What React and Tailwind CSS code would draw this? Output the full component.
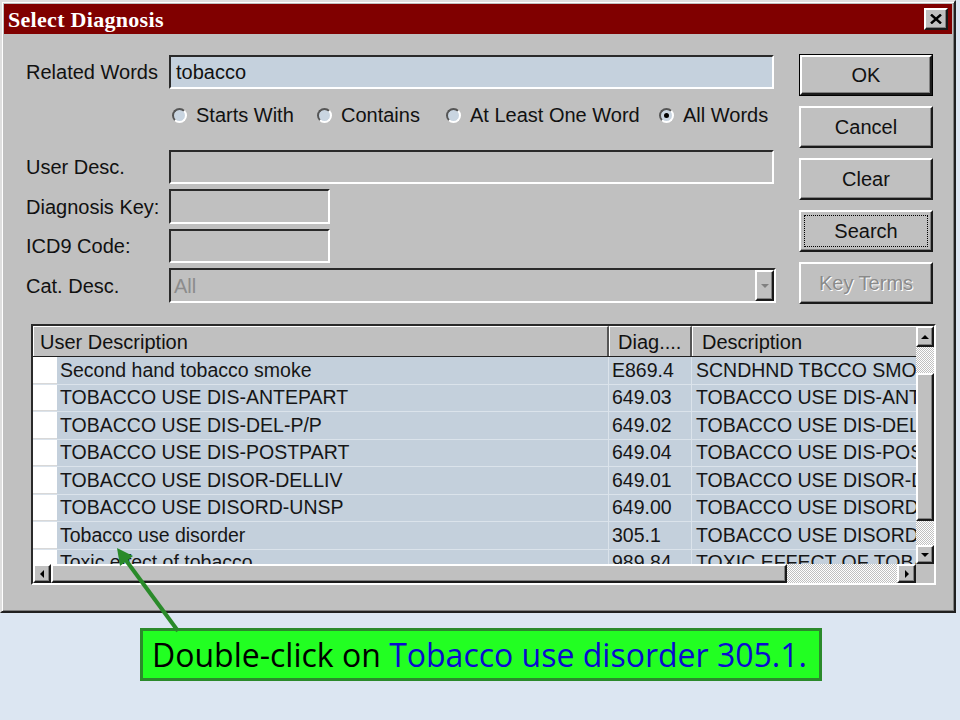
import React from 'react';

const rows = [
  ['Second hand tobacco smoke', 'E869.4', 'SCNDHND TBCCO SMOKE'],
  ['TOBACCO USE DIS-ANTEPART', '649.03', 'TOBACCO USE DIS-ANTEPART'],
  ['TOBACCO USE DIS-DEL-P/P', '649.02', 'TOBACCO USE DIS-DEL-P/P'],
  ['TOBACCO USE DIS-POSTPART', '649.04', 'TOBACCO USE DIS-POSTPART'],
  ['TOBACCO USE DISOR-DELLIV', '649.01', 'TOBACCO USE DISOR-DELLIV'],
  ['TOBACCO USE DISORD-UNSP', '649.00', 'TOBACCO USE DISORD-UNSP'],
  ['Tobacco use disorder', '305.1', 'TOBACCO USE DISORDER'],
  ['Toxic effect of tobacco', '989.84', 'TOXIC EFFECT OF TOBACCO'],
];

const sunken = 'border-2 border-t-[#2a2a2a] border-l-[#2a2a2a] border-r-white border-b-white';
const raised = 'border-2 border-t-white border-l-white border-r-[#1a1a1a] border-b-[#1a1a1a] shadow-[inset_-1px_-1px_#808080]';
const dither = 'bg-[repeating-conic-gradient(#c0c0c0_0%_25%,#ffffff_0%_50%)] bg-size-[2px_2px]';

function clsxs(...c) {
  return c.filter(Boolean).join(' ');
}

function Field({ label, className = '', children }) {
  return (
    <div className={`flex items-center ${className}`}>
      <div className="w-[143px] text-[20px] text-[#111]">{label}</div>
      {children}
    </div>
  );
}

function Radio({ label, checked, className = '' }) {
  return (
    <div className={`flex items-center ${className}`}>
      <span className="w-[15px] h-[15px] rounded-full bg-[#c9d5e1] border-2 border-t-[#555] border-l-[#555] border-r-white border-b-white flex items-center justify-center">
        {checked && <span className="w-[5px] h-[5px] rounded-full bg-black" />}
      </span>
      <span className="ml-[9px] text-[20px] text-[#111]">{label}</span>
    </div>
  );
}

function Button({ children, isDefault, focused, disabled }) {
  return (
    <div className={clsxs('w-[134px] h-[42px]', isDefault && 'border border-black')}>
      <div className={`relative w-full h-full bg-[#c0c0c0] ${raised} flex items-center justify-center text-[20px]`}>
        {focused && <div className="absolute inset-[3px] border border-dotted border-black" />}
        <span className={disabled ? 'text-[#8a8a8a] [text-shadow:1px_1px_0_#ffffff]' : 'text-[#111]'}>{children}</span>
      </div>
    </div>
  );
}

function Arrow({ dir, color = '#000' }) {
  const pts = {
    up: '1,6 5,2 9,6',
    down: '1,2 5,6 9,2',
    left: '6,1 2,5 6,9',
    right: '2,1 6,5 2,9',
  }[dir];
  const vertical = dir === 'up' || dir === 'down';
  return (
    <svg viewBox={vertical ? '0 0 10 8' : '0 0 8 10'} className={vertical ? 'w-[10px] h-[8px]' : 'w-[8px] h-[10px]'}>
      <polygon points={pts} fill={color} />
    </svg>
  );
}

function ScrollButton({ dir, className = '' }) {
  return (
    <div className={`bg-[#c0c0c0] ${raised} flex items-center justify-center ${className}`}>
      <Arrow dir={dir} />
    </div>
  );
}

function DiagnosisGrid() {
  return (
    <div className={`ml-[27px] mt-[20px] w-[905px] h-[261px] ${sunken} flex bg-[#c0c0c0]`}>
      <div className="flex flex-col w-[883px]">
        {/* header */}
        <div className="flex h-[31px] border-b border-[#202020] text-[20px] text-[#111]">
          <div className="w-[576px] pl-[6px] flex items-center border-t border-l border-white border-r-2 border-r-[#555]">User Description</div>
          <div className="w-[83px] pl-[8px] flex items-center border-t border-l border-white border-r-2 border-r-[#555]">Diag....</div>
          <div className="flex-1 pl-[9px] flex items-center border-t border-l border-white">Description</div>
        </div>
        {/* rows */}
        <div className="flex-1 overflow-hidden bg-[#c4d0dc] text-[19.5px] text-[#161616]">
          {rows.map(([user, code, desc]) => (
            <div key={code} className="flex h-[27.5px] border-b border-[#dbe3eb] whitespace-nowrap">
              <div className="w-[24px] shrink-0 bg-white border-b border-[#d8d8d8]" />
              <div className="w-[552px] shrink-0 pl-[3px] flex items-center border-r border-[#dbe3eb]">{user}</div>
              <div className="w-[83px] shrink-0 pl-[3px] flex items-center border-r border-[#dbe3eb]">{code}</div>
              <div className="flex-1 overflow-hidden pl-[4px] flex items-center">{desc}</div>
            </div>
          ))}
        </div>
        {/* horizontal scrollbar */}
        <div className="flex h-[19px] shrink-0">
          <ScrollButton dir="left" className="w-[18px]" />
          <div className={`w-[736px] bg-[#c0c0c0] ${raised}`} />
          <div className={`flex-1 ${dither}`} />
          <ScrollButton dir="right" className="w-[19px]" />
        </div>
      </div>
      {/* vertical scrollbar */}
      <div className="flex flex-col w-[18px]">
        <ScrollButton dir="up" className="h-[21px]" />
        <div className={`h-[26px] ${dither}`} />
        <div className={`h-[148px] bg-[#c0c0c0] ${raised}`} />
        <div className={`h-[24px] ${dither}`} />
        <ScrollButton dir="down" className="h-[19px]" />
        <div className="flex-1 bg-[#c0c0c0]" />
      </div>
    </div>
  );
}

export default function App() {
  return (
    <div className="relative w-[960px] h-[720px] overflow-hidden bg-[#dce6f2] font-['Liberation_Sans',Arial,sans-serif]">
      {/* dialog window */}
      <div className="w-[956px] h-[613px] bg-[#c0c0c0] border-2 border-t-[#dfdfdf] border-l-[#dfdfdf] border-r-[#202020] border-b-[#202020] p-[2px] shadow-[inset_1px_1px_#ffffff,inset_-1px_-1px_#808080] flex flex-col">
        {/* title bar */}
        <div className="h-[30px] shrink-0 bg-[#800000] flex items-center justify-between pl-[4px] pr-[4px]">
          <span className="font-['Liberation_Serif',serif] font-bold text-[22px] text-white tracking-[0.3px]">Select Diagnosis</span>
          <div className={`w-[24px] h-[22px] bg-[#c0c0c0] ${raised} flex items-center justify-center`}>
            <svg viewBox="0 0 12 10" className="w-[12px] h-[10px]">
              <path d="M1 0.5 L11 9.5 M11 0.5 L1 9.5" stroke="#000" strokeWidth="2.4" />
            </svg>
          </div>
        </div>

        <div className="flex pl-[22px] pt-[20px]">
          {/* form */}
          <div className="w-[750px] mt-[1px] flex flex-col">
            <Field label="Related Words" className="h-[34px]">
              <div className={`w-[605px] h-full ${sunken} bg-[#c5d1dd] pl-[5px] flex items-center text-[20px] text-[#111]`}>tobacco</div>
            </Field>
            <div className="flex items-center h-[30px] mt-[11px] ml-[146px]">
              <Radio label="Starts With" className="w-[145px]" />
              <Radio label="Contains" className="w-[129px]" />
              <Radio label="At Least One Word" className="w-[213px]" />
              <Radio label="All Words" checked />
            </div>
            <Field label="User Desc." className="h-[34px] mt-[20px]">
              <div className={`w-[605px] h-full ${sunken}`} />
            </Field>
            <Field label="Diagnosis Key:" className="h-[35px] mt-[5px]">
              <div className={`w-[161px] h-full ${sunken}`} />
            </Field>
            <Field label="ICD9 Code:" className="h-[34px] mt-[5px]">
              <div className={`w-[161px] h-full ${sunken}`} />
            </Field>
            <Field label="Cat. Desc." className="h-[35px] mt-[5px]">
              <div className={`w-[607px] h-full ${sunken} flex items-center justify-between`}>
                <span className="pl-[3px] text-[20px] text-[#8c8c8c]">All</span>
                <div className={`w-[19px] h-full bg-[#c0c0c0] ${raised} flex items-center justify-center`}>
                  <Arrow dir="down" color="#808080" />
                </div>
              </div>
            </Field>
          </div>

          {/* buttons */}
          <div className="ml-[23px] flex flex-col gap-[10px]">
            <Button isDefault>OK</Button>
            <Button>Cancel</Button>
            <Button>Clear</Button>
            <Button focused>Search</Button>
            <Button disabled>Key Terms</Button>
          </div>
        </div>

        <DiagnosisGrid />
      </div>

      {/* callout */}
      <div className="mt-[15px] ml-[140px] w-[682px] h-[53px] border-[3px] border-[#2b8a2b] bg-[#22ff22] flex items-center pl-[9px] text-[32px] font-['Open_Sans',sans-serif] whitespace-nowrap">
        <span className="text-black">Double-click on&nbsp;</span>
        <span className="text-[#0a0ad0]">Tobacco use disorder 305.1.</span>
      </div>

      {/* pointer arrow */}
      <svg className="absolute top-0 left-0 w-[960px] h-[720px] pointer-events-none" viewBox="0 0 960 720">
        <line x1="178" y1="631" x2="125" y2="559" stroke="#2a8a2a" strokeWidth="4" />
        <polygon points="117,548 133,556 120,566" fill="#2a8a2a" />
      </svg>
    </div>
  );
}
